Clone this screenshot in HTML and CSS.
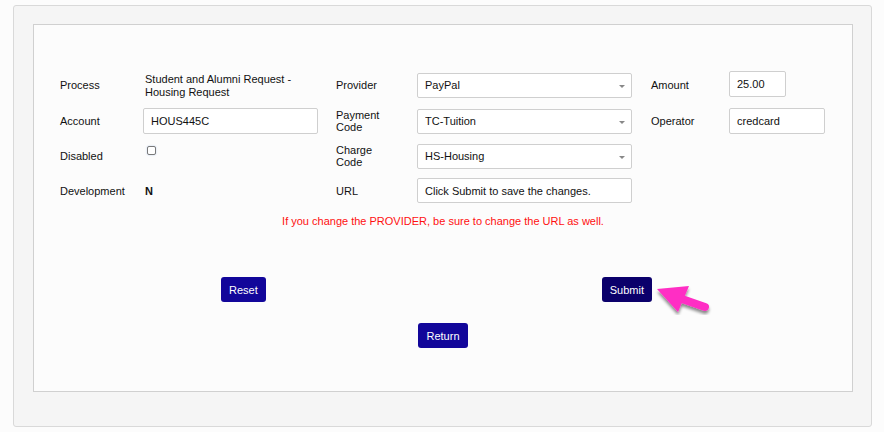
FILE: index.html
```html
<!DOCTYPE html>
<html lang="en">
<head>
  <meta charset="UTF-8">
  <title>Edit Process</title>
  <link rel="stylesheet" href="styles.css">
</head>
<body>
  <div class="panel">
    <div class="card">
      <form class="form-grid">
        <label class="lbl">Process</label>
        <div class="value">Student and Alumni Request -<br>Housing Request</div>
        <label class="lbl">Provider</label>
        <div class="select-wrap"><select class="field"><option>PayPal</option></select></div>
        <label class="lbl">Amount</label>
        <div><input class="field amount" type="text" value="25.00"></div>

        <label class="lbl">Account</label>
        <div><input class="field account" type="text" value="HOUS445C"></div>
        <label class="lbl">Payment<br>Code</label>
        <div class="select-wrap"><select class="field"><option>TC-Tuition</option></select></div>
        <label class="lbl">Operator</label>
        <div><input class="field operator" type="text" value="credcard"></div>

        <label class="lbl">Disabled</label>
        <div class="check-cell"><input class="check" type="checkbox"></div>
        <label class="lbl">Charge<br>Code</label>
        <div class="select-wrap"><select class="field"><option>HS-Housing</option></select></div>
        <div></div>
        <div></div>

        <label class="lbl">Development</label>
        <div class="value strong">N</div>
        <label class="lbl">URL</label>
        <div><input class="field url" type="text" value="Click Submit to save the changes."></div>
        <div></div>
        <div></div>
      </form>

      <p class="warning">If you change the PROVIDER, be sure to change the URL as well.</p>

      <div class="actions">
        <button class="btn" type="button">Reset</button>
        <span class="submit-holder">
          <button class="btn btn-dark" type="button">Submit</button>
          <svg class="pointer" width="60" height="36" viewBox="0 0 60 36">
            <defs>
              <filter id="shade" x="-20%" y="-20%" width="150%" height="160%">
                <feDropShadow dx="0" dy="3" stdDeviation="1.6" flood-color="#000" flood-opacity="0.45"/>
              </filter>
            </defs>
            <g filter="url(#shade)">
              <polygon points="2,10 34,7 23,33" fill="#ff2ec4"/>
              <line x1="27" y1="20" x2="50" y2="28" stroke="#ff2ec4" stroke-width="8" stroke-linecap="round"/>
            </g>
          </svg>
        </span>
      </div>

      <div class="return-row">
        <button class="btn" type="button">Return</button>
      </div>
    </div>
  </div>
</body>
</html>
```

FILE: styles.css
```css
html, body {
  margin: 0;
  background-color: #fcfcfc;
}
body {
  font-family: "Liberation Sans", Arial, sans-serif;
  font-size: 11px;
  color: #111;
  padding: 5px 12px 5px 13px;
}
.panel {
  height: 422px;
  box-sizing: border-box;
  background-color: #f5f5f5;
  border: 1px solid #d9d9d9;
  border-radius: 3px;
  padding: 18px 18px 0 19px;
}
.card {
  height: 368px;
  box-sizing: border-box;
  background-color: #fcfcfc;
  border: 1px solid #d0d0d0;
  padding-top: 47px;
}
.form-grid {
  display: grid;
  grid-template-columns: 83px 193px 81px 234px 78px auto;
  grid-template-rows: 26px 26px 24px 25px;
  row-gap: 10px;
  margin: 0 0 0 26px;
  align-items: center;
}
.lbl {
  line-height: 12px;
  color: #111;
}
.value {
  line-height: 13px;
  padding-left: 2px;
  padding-top: 1px;
}
.strong {
  font-weight: bold;
}
.field {
  font-family: inherit;
  font-size: 11px;
  color: #111;
  box-sizing: border-box;
  height: 26px;
  border: 1px solid #cfcfcf;
  border-radius: 2px;
  background-color: #fff;
  padding: 0 7px;
  margin: 0;
  outline: none;
}
.account { width: 175px; }
.amount { width: 57px; margin-top: -2px; }
.operator { width: 96px; }
.url { width: 215px; height: 25px; }
.select-wrap {
  position: relative;
  width: 215px;
}
.select-wrap select {
  -webkit-appearance: none;
  appearance: none;
  width: 215px;
  height: 25px;
}
.select-wrap::after {
  content: "";
  position: absolute;
  right: 7px;
  top: 12px;
  border-left: 3px solid transparent;
  border-right: 3px solid transparent;
  border-top: 3px solid #888;
}
.check-cell {
  align-self: start;
}
.check {
  -webkit-appearance: none;
  appearance: none;
  width: 9px;
  height: 9px;
  margin: 2px 0 0 4px;
  border: 1px solid #7a7a7a;
  border-radius: 2px;
  background-color: #fff;
  box-shadow: 0 0 2px #b9cde8;
}
.warning {
  color: #ff1010;
  text-align: center;
  margin: 12px 0 0;
  line-height: 13px;
}
.actions {
  display: flex;
  justify-content: space-between;
  padding: 0 200px 0 187px;
  margin-top: 49px;
}
.btn {
  font-family: inherit;
  font-size: 11px;
  color: #fff;
  background-color: #12069a;
  border: none;
  border-radius: 3px;
  height: 25px;
  padding: 0 8px;
  cursor: pointer;
}
.btn-dark {
  background-color: #0b006b;
}
.submit-holder {
  position: relative;
}
.pointer {
  position: absolute;
  left: 53px;
  top: 2px;
}
.return-row {
  text-align: center;
  margin-top: 21px;
}
```
